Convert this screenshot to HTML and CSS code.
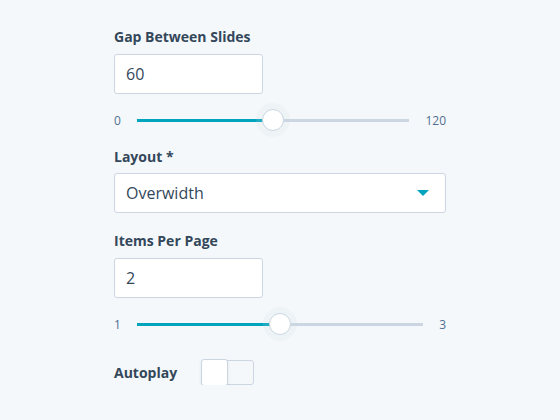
FILE: index.html
```html
<!DOCTYPE html>
<html lang="en">
<head>
    <meta charset="UTF-8">
    <title>Carousel settings</title>
    <link rel="stylesheet" href="styles.css">
</head>
<body>
    <div class="settings">
        <div class="field">
            <label class="fieldLabel">Gap Between Slides</label>
            <div class="textInput small">60</div>
            <div class="slider">
                <span class="sliderMin">0</span>
                <div class="sliderTrack">
                    <div class="sliderFill" style="width: 50%"></div>
                    <span class="sliderThumb" style="left: 50%"></span>
                </div>
                <span class="sliderMax">120</span>
            </div>
        </div>

        <div class="field">
            <label class="fieldLabel">Layout *</label>
            <div class="textInput select">
                <span>Overwidth</span>
                <span class="caret"></span>
            </div>
        </div>

        <div class="field">
            <label class="fieldLabel">Items Per Page</label>
            <div class="textInput small">2</div>
            <div class="slider">
                <span class="sliderMin">1</span>
                <div class="sliderTrack">
                    <div class="sliderFill" style="width: 50%"></div>
                    <span class="sliderThumb" style="left: 50%"></span>
                </div>
                <span class="sliderMax">3</span>
            </div>
        </div>

        <div class="toggleRow">
            <span class="fieldLabel">Autoplay</span>
            <span class="toggle"><span class="toggleKnob"></span></span>
        </div>
    </div>
</body>
</html>
```

FILE: styles.css
```css
* {
    margin: 0;
    padding: 0;
    box-sizing: border-box;
}

body {
    background-color: #f5f8fa;
    color: #33475b;
    font-family: "Open Sans", "Liberation Sans", sans-serif;
}

.settings {
    width: 332px;
    margin-left: 114px;
    padding-top: 27px;
}

.field {
    margin-bottom: 16px;
}

.fieldLabel {
    display: block;
    font-size: 14px;
    font-weight: 700;
    line-height: 20px;
    margin-bottom: 7px;
}

.textInput {
    height: 40px;
    padding: 0 11px;
    background-color: #fff;
    border: 1px solid #cbd6e2;
    border-radius: 3px;
    font-size: 16px;
    line-height: 38px;
}

.textInput.small {
    width: 149px;
}

.select {
    display: flex;
    justify-content: space-between;
    align-items: center;
    padding-right: 16px;
    margin-top: -1px;
    margin-bottom: 18px;
}

.caret {
    width: 0;
    height: 0;
    border-left: 6px solid transparent;
    border-right: 6px solid transparent;
    border-top: 6px solid #00a4bd;
}

.slider {
    display: flex;
    align-items: center;
    gap: 16px;
    height: 22px;
    margin-top: 15px;
    font-size: 12px;
    color: #516f90;
}

.sliderTrack {
    position: relative;
    flex: 1;
    height: 3px;
    background-color: #cbd6e2;
}

.sliderFill {
    height: 100%;
    background-color: #00a4bd;
}

.sliderThumb {
    position: absolute;
    top: 50%;
    width: 22px;
    height: 22px;
    margin: -11px 0 0 -11px;
    border: 1px solid #cbd6e2;
    border-radius: 50%;
    background-color: #fff;
    box-shadow: 0 0 0 6px rgba(203, 214, 226, 0.15);
}

.toggleRow {
    display: flex;
    align-items: center;
    margin-top: 25px;
}

.toggleRow .fieldLabel {
    margin: 0;
    width: 87px;
}

.toggle {
    position: relative;
    width: 53px;
    height: 25px;
    border: 1px solid #cbd6e2;
    border-radius: 3px;
}

.toggleKnob {
    position: absolute;
    left: -1px;
    top: -2px;
    width: 27px;
    height: 27px;
    background-color: #fff;
    border: 1px solid #cbd6e2;
    border-radius: 3px;
    box-shadow: 0 2px 3px rgba(45, 62, 80, 0.1);
}
```
